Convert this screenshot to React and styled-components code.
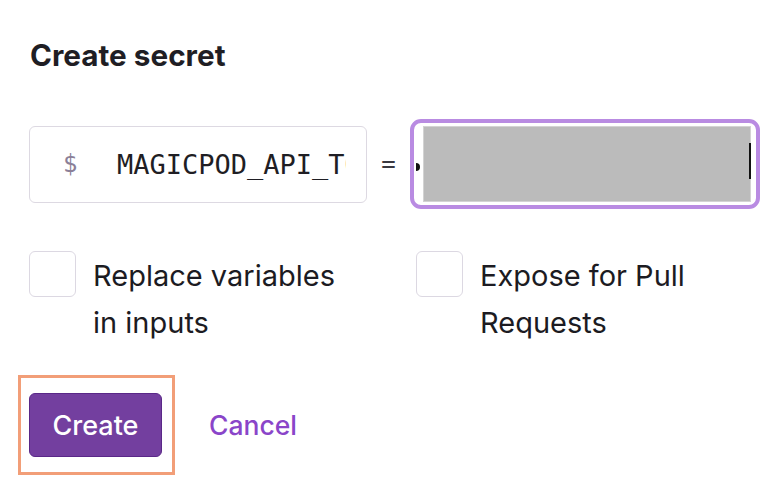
import React from "react";
import styled, { createGlobalStyle } from "styled-components";

const Global = createGlobalStyle`
  html, body { margin: 0; padding: 0; background: #ffffff; }
  body { font-family: Inter, "Noto Sans", sans-serif; color: #1c1b22; }
  * { box-sizing: border-box; }
`;

const Page = styled.div`
  width: 776px;
  height: 484px;
  padding: 36px 0 0 29px;
  display: flex;
  flex-direction: column;
`;

const Title = styled.h2`
  margin: 0 0 0 1px;
  font-size: 29.7px;
  line-height: 38px;
  font-weight: 700;
  letter-spacing: 0;
  color: #1f1e24;
`;

const FieldRow = styled.div`
  margin-top: 45px;
  display: flex;
  align-items: center;
`;

const NameBox = styled.label`
  width: 338px;
  height: 77px;
  border: 1px solid #ddd9e2;
  border-radius: 6px;
  display: flex;
  align-items: center;
  padding-left: 33px;
  overflow: hidden;
`;

const Prefix = styled.span`
  font-family: "DejaVu Sans Mono", monospace;
  font-size: 24px;
  color: #8b7f98;
  width: 54px;
`;

const NameInput = styled.input`
  border: none;
  outline: none;
  padding: 0;
  width: 229px;
  font-family: "DejaVu Sans Mono", monospace;
  font-size: 27px;
  color: #1f1e24;
  background: transparent;
`;

const Equals = styled.span`
  width: 43px;
  text-align: center;
  font-family: "DejaVu Sans Mono", monospace;
  font-size: 24px;
  color: #3a3940;
`;

const FocusRing = styled.div`
  width: 350px;
  height: 90px;
  border: 4px solid #b98be2;
  border-radius: 11px;
  padding: 3px 5px 3px 3px;
  display: flex;
  align-items: center;
  position: relative;
`;

const Redacted = styled.div`
  flex: 1;
  height: 100%;
  margin-left: 6px;
  background: #bbbbbb;
  border: 1px solid #d3d3d3;
  position: relative;
`;

const Caret = styled.span`
  position: absolute;
  right: -1px;
  top: 16px;
  width: 2px;
  height: 36px;
  background: #111;
`;

const Nub = styled.span`
  position: absolute;
  left: 2px;
  top: 40px;
  width: 4px;
  height: 8px;
  border-radius: 0 4px 4px 0;
  background: #111;
`;

const OptionGrid = styled.div`
  margin-top: 42px;
  display: grid;
  grid-template-columns: 387px 1fr;
`;

const Option = styled.label`
  display: flex;
  align-items: flex-start;
  gap: 17px;
`;

const Box = styled.span`
  flex: none;
  width: 47px;
  height: 46px;
  border: 1px solid #dcd8e2;
  border-radius: 6px;
  background: #fff;
`;

const OptionText = styled.span`
  font-size: 29px;
  line-height: 47px;
  margin-top: 1px;
  color: #1c1b22;
  width: ${(p) => p.$w}px;
`;

const Actions = styled.div`
  margin-top: 29px;
  margin-left: -11px;
  display: flex;
  align-items: center;
  gap: 34px;
`;

const Highlight = styled.div`
  border: 3px solid #f29e78;
  padding: 15px 10px 15px 8px;
`;

const PrimaryButton = styled.button`
  display: block;
  width: 133px;
  height: 64px;
  background: #733f9f;
  border: 1px solid #5a2888;
  border-radius: 6px;
  color: #fff;
  font-family: Inter, sans-serif;
  font-size: 27px;
  font-weight: 500;
  padding: 0;
`;

const LinkButton = styled.button`
  background: none;
  border: none;
  padding: 0;
  font-family: Inter, sans-serif;
  font-size: 26.5px;
  font-weight: 500;
  color: #8a45c9;
`;

export default function App() {
  return (
    <>
      <Global />
      <Page>
        <Title>Create secret</Title>
        <FieldRow>
          <NameBox>
            <Prefix>$</Prefix>
            <NameInput defaultValue="MAGICPOD_API_TOKEN" />
          </NameBox>
          <Equals>=</Equals>
          <FocusRing>
            <Nub />
            <Redacted>
              <Caret />
            </Redacted>
          </FocusRing>
        </FieldRow>
        <OptionGrid>
          <Option>
            <Box />
            <OptionText $w={252}>Replace variables in inputs</OptionText>
          </Option>
          <Option>
            <Box />
            <OptionText $w={222}>Expose for Pull Requests</OptionText>
          </Option>
        </OptionGrid>
        <Actions>
          <Highlight>
            <PrimaryButton>Create</PrimaryButton>
          </Highlight>
          <LinkButton>Cancel</LinkButton>
        </Actions>
      </Page>
    </>
  );
}
